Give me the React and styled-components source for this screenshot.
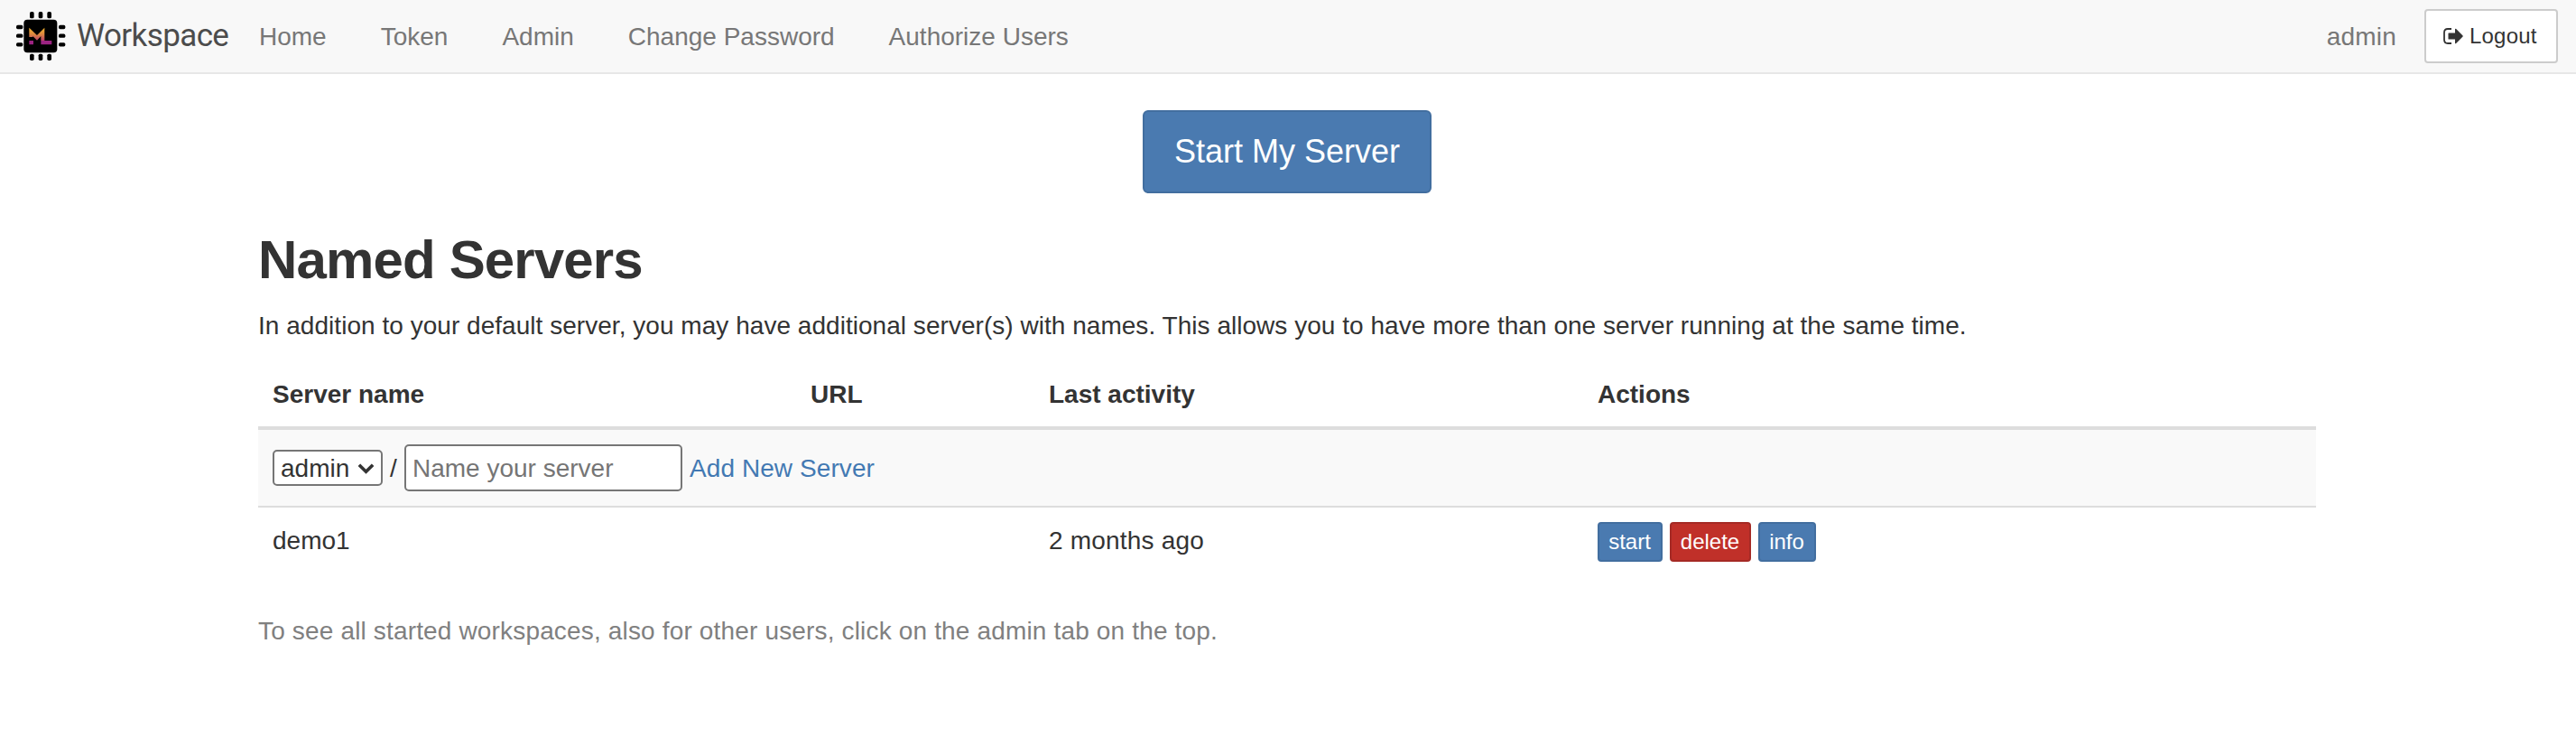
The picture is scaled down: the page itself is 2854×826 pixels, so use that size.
import React from "react";
import styled, { createGlobalStyle } from "styled-components";

const GlobalStyle = createGlobalStyle`
  *, *::before, *::after { box-sizing: border-box; }
  body {
    margin: 0;
    background: #fff;
    color: #333;
    font: 28px/40px "Liberation Sans", Arial, sans-serif;
  }
`;

const Navbar = styled.nav`
  display: flex;
  align-items: center;
  height: 82px;
  padding: 0 20px 2px 18px;
  background: #f8f8f8;
  box-shadow: inset 0 -2px #e7e7e7;
`;

const Brand = styled.a`
  display: flex;
  align-items: center;
  width: 239px;
  color: #4c4c4c;
  font: 400 35px/40px Roboto, sans-serif;
  letter-spacing: -0.6px;
`;

const BrandLogo = styled.svg`
  width: 55px;
  height: 54px;
  margin-right: 12px;
`;

const NavList = styled.div`
  display: flex;
  flex: 1;
`;

const NavLink = styled.a`
  padding: 2px 30px 0;
  color: #777;
`;

const UserName = styled.span`
  margin-right: 31px;
  padding-top: 2px;
  color: #777;
  letter-spacing: 0.2px;
`;

const Button = styled.button`
  display: inline-flex;
  align-items: center;
  justify-content: center;
  border: 2px solid ${(p) => p.$border || "#426e9f"};
  background: ${(p) => p.$bg || "#4a7ab0"};
  color: #fff;
  font-family: inherit;
  border-radius: 4px;
`;

const LogoutButton = styled(Button)`
  justify-content: flex-start;
  width: 148px;
  height: 60px;
  padding: 0 0 0 19px;
  font-size: 24px;
  letter-spacing: 0.2px;
  color: #333;
`;

const LogoutIcon = styled.svg`
  width: 22px;
  height: 18px;
  margin-right: 7px;
`;

const StartButton = styled(Button)`
  width: 320px;
  height: 92px;
  border-radius: 6px;
  font-size: 36px;
`;

const SmallButton = styled(Button)`
  width: ${(p) => p.$width}px;
  height: 44px;
  padding: 0 1px 0 0;
  font-size: 24px;
`;

const Container = styled.main`
  width: 2280px;
  margin-left: 286px;
`;

const Center = styled.div`
  display: flex;
  justify-content: center;
  padding-top: 40px;
`;

const Title = styled.h1`
  margin: 41px 0 19px;
  font-size: 60px;
  line-height: 66px;
  font-weight: 700;
  letter-spacing: -0.85px;
`;

const Paragraph = styled.p`
  margin: 0 0 19px;
  padding-top: 1px;
  letter-spacing: 0.035px;
`;

const Hint = styled(Paragraph)`
  margin-top: 38px;
  color: #808080;
  letter-spacing: 0.16px;
`;

const Table = styled.table`
  width: 100%;
  table-layout: fixed;
  border-collapse: separate;
  border-spacing: 0;
`;

const HeadCell = styled.th`
  width: ${(p) => (p.$width ? `${p.$width}px` : "auto")};
  padding: 17px 16px 15px;
  text-align: left;
  border-bottom: 4px solid #ddd;
`;

const FormCell = styled.td`
  height: 84px;
  padding: 0 16px;
  vertical-align: middle;
  background: #f9f9f9;
`;

const Cell = styled.td`
  height: 80px;
  padding: ${(p) => (p.$controls ? 16 : 17)}px 16px 0;
  vertical-align: top;
  border-top: 2px solid #ddd;
  letter-spacing: ${(p) => p.$track || 0}px;
`;

const NewServer = styled.div`
  display: flex;
  align-items: center;
`;

const UserSelect = styled.div`
  display: flex;
  align-items: center;
  justify-content: space-between;
  width: 122px;
  height: 40px;
  padding: 0 7px;
  border: 2px solid #767676;
  border-radius: 5px;
  background: #fff;
`;

const Label = styled.span`
  padding-top: 2px;
`;

const Chevron = styled.svg`
  width: 19px;
  height: 13px;
`;

const Slash = styled(Label)`
  width: 24px;
  text-align: center;
`;

const NameInput = styled.input`
  width: 308px;
  height: 52px;
  margin-right: 8px;
  padding: 2px 7px 0;
  border: 2px solid #767676;
  border-radius: 5px;
  background: #fff;
  font: inherit;
  &::placeholder { color: #757575; }
`;

const Link = styled.a`
  padding-top: 2px;
  color: #4379b3;
  letter-spacing: 0.08px;
`;

const Actions = styled.div`
  display: flex;
  gap: 8px;
`;

const pins = [50.5, 79.5, 108.5];

function Logo() {
  return (
    <BrandLogo viewBox="0 0 165 162">
      <defs>
        <linearGradient id="flame" gradientUnits="userSpaceOnUse" x1="0" y1="53" x2="0" y2="97">
          <stop offset="0" stopColor="#f3b52b" />
          <stop offset="0.5" stopColor="#dd8740" />
          <stop offset="1" stopColor="#b83c6c" />
        </linearGradient>
      </defs>
      <rect x="25" y="26" width="111" height="110" rx="12" />
      {pins.map((c) => (
        <g key={c}>
          <rect x={c - 5.5} y="0" width="14" height="22" rx="5" />
          <rect x={c - 5.5} y="140" width="14" height="22" rx="5" />
          <rect x="0" y={c - 6} width="22" height="13" rx="5" />
          <rect x="141" y={c - 6} width="22" height="13" rx="5" />
        </g>
      ))}
      <path d="M43 53L69 78L94 53V97H82V81L69 95L55 81V84H43Z" fill="url(#flame)" />
      <path d="M43 96H57V109H43ZM82 96H118V109H82Z" fill="#9c2382" />
    </BrandLogo>
  );
}

export default function App() {
  return (
    <>
      <GlobalStyle />
      <Navbar>
        <Brand><Logo />Workspace</Brand>
        <NavList>
          <NavLink>Home</NavLink>
          <NavLink>Token</NavLink>
          <NavLink>Admin</NavLink>
          <NavLink>Change Password</NavLink>
          <NavLink>Authorize Users</NavLink>
        </NavList>
        <UserName>admin</UserName>
        <LogoutButton $bg="#fff" $border="#ccc">
          <LogoutIcon viewBox="0 0 22 18">
            <path d="M9 1H5Q1 1 1 5V13Q1 17 5 17H9" fill="none" stroke="#333" strokeWidth="1.8" />
            <path d="M6 5.5H13V1.2Q13.3 0.2 14.2 1L21.6 8.5Q22 9 21.6 9.5L14.2 17Q13.3 17.8 13 16.8V12.5H6Q5.5 12.5 5.5 12V6Q5.5 5.5 6 5.5Z" fill="#333" />
          </LogoutIcon>
          Logout
        </LogoutButton>
      </Navbar>
      <Container>
        <Center><StartButton>Start My Server</StartButton></Center>
        <Title>Named Servers</Title>
        <Paragraph>
          In addition to your default server, you may have additional server(s) with names. This allows you to have more than one server running at the same time.
        </Paragraph>
        <Table>
          <thead>
            <tr>
              <HeadCell $width={596}>Server name</HeadCell>
              <HeadCell $width={264}>URL</HeadCell>
              <HeadCell $width={608}>Last activity</HeadCell>
              <HeadCell>Actions</HeadCell>
            </tr>
          </thead>
          <tbody>
            <tr>
              <FormCell colSpan={4}>
                <NewServer>
                  <UserSelect>
                    <Label>admin</Label>
                    <Chevron viewBox="0 0 20 13">
                      <path d="M2 2.5L10 10.5L18 2.5" fill="none" stroke="#333" strokeWidth="3.8" />
                    </Chevron>
                  </UserSelect>
                  <Slash>/</Slash>
                  <NameInput placeholder="Name your server" />
                  <Link>Add New Server</Link>
                </NewServer>
              </FormCell>
            </tr>
            <tr>
              <Cell>demo1</Cell>
              <Cell />
              <Cell $track={0.2}>2 months ago</Cell>
              <Cell $controls>
                <Actions>
                  <SmallButton $width={72}>start</SmallButton>
                  <SmallButton $width={90} $bg="#c03029" $border="#a52a25">delete</SmallButton>
                  <SmallButton $width={64}>info</SmallButton>
                </Actions>
              </Cell>
            </tr>
          </tbody>
        </Table>
        <Hint>
          To see all started workspaces, also for other users, click on the admin tab on the top.
        </Hint>
      </Container>
    </>
  );
}
